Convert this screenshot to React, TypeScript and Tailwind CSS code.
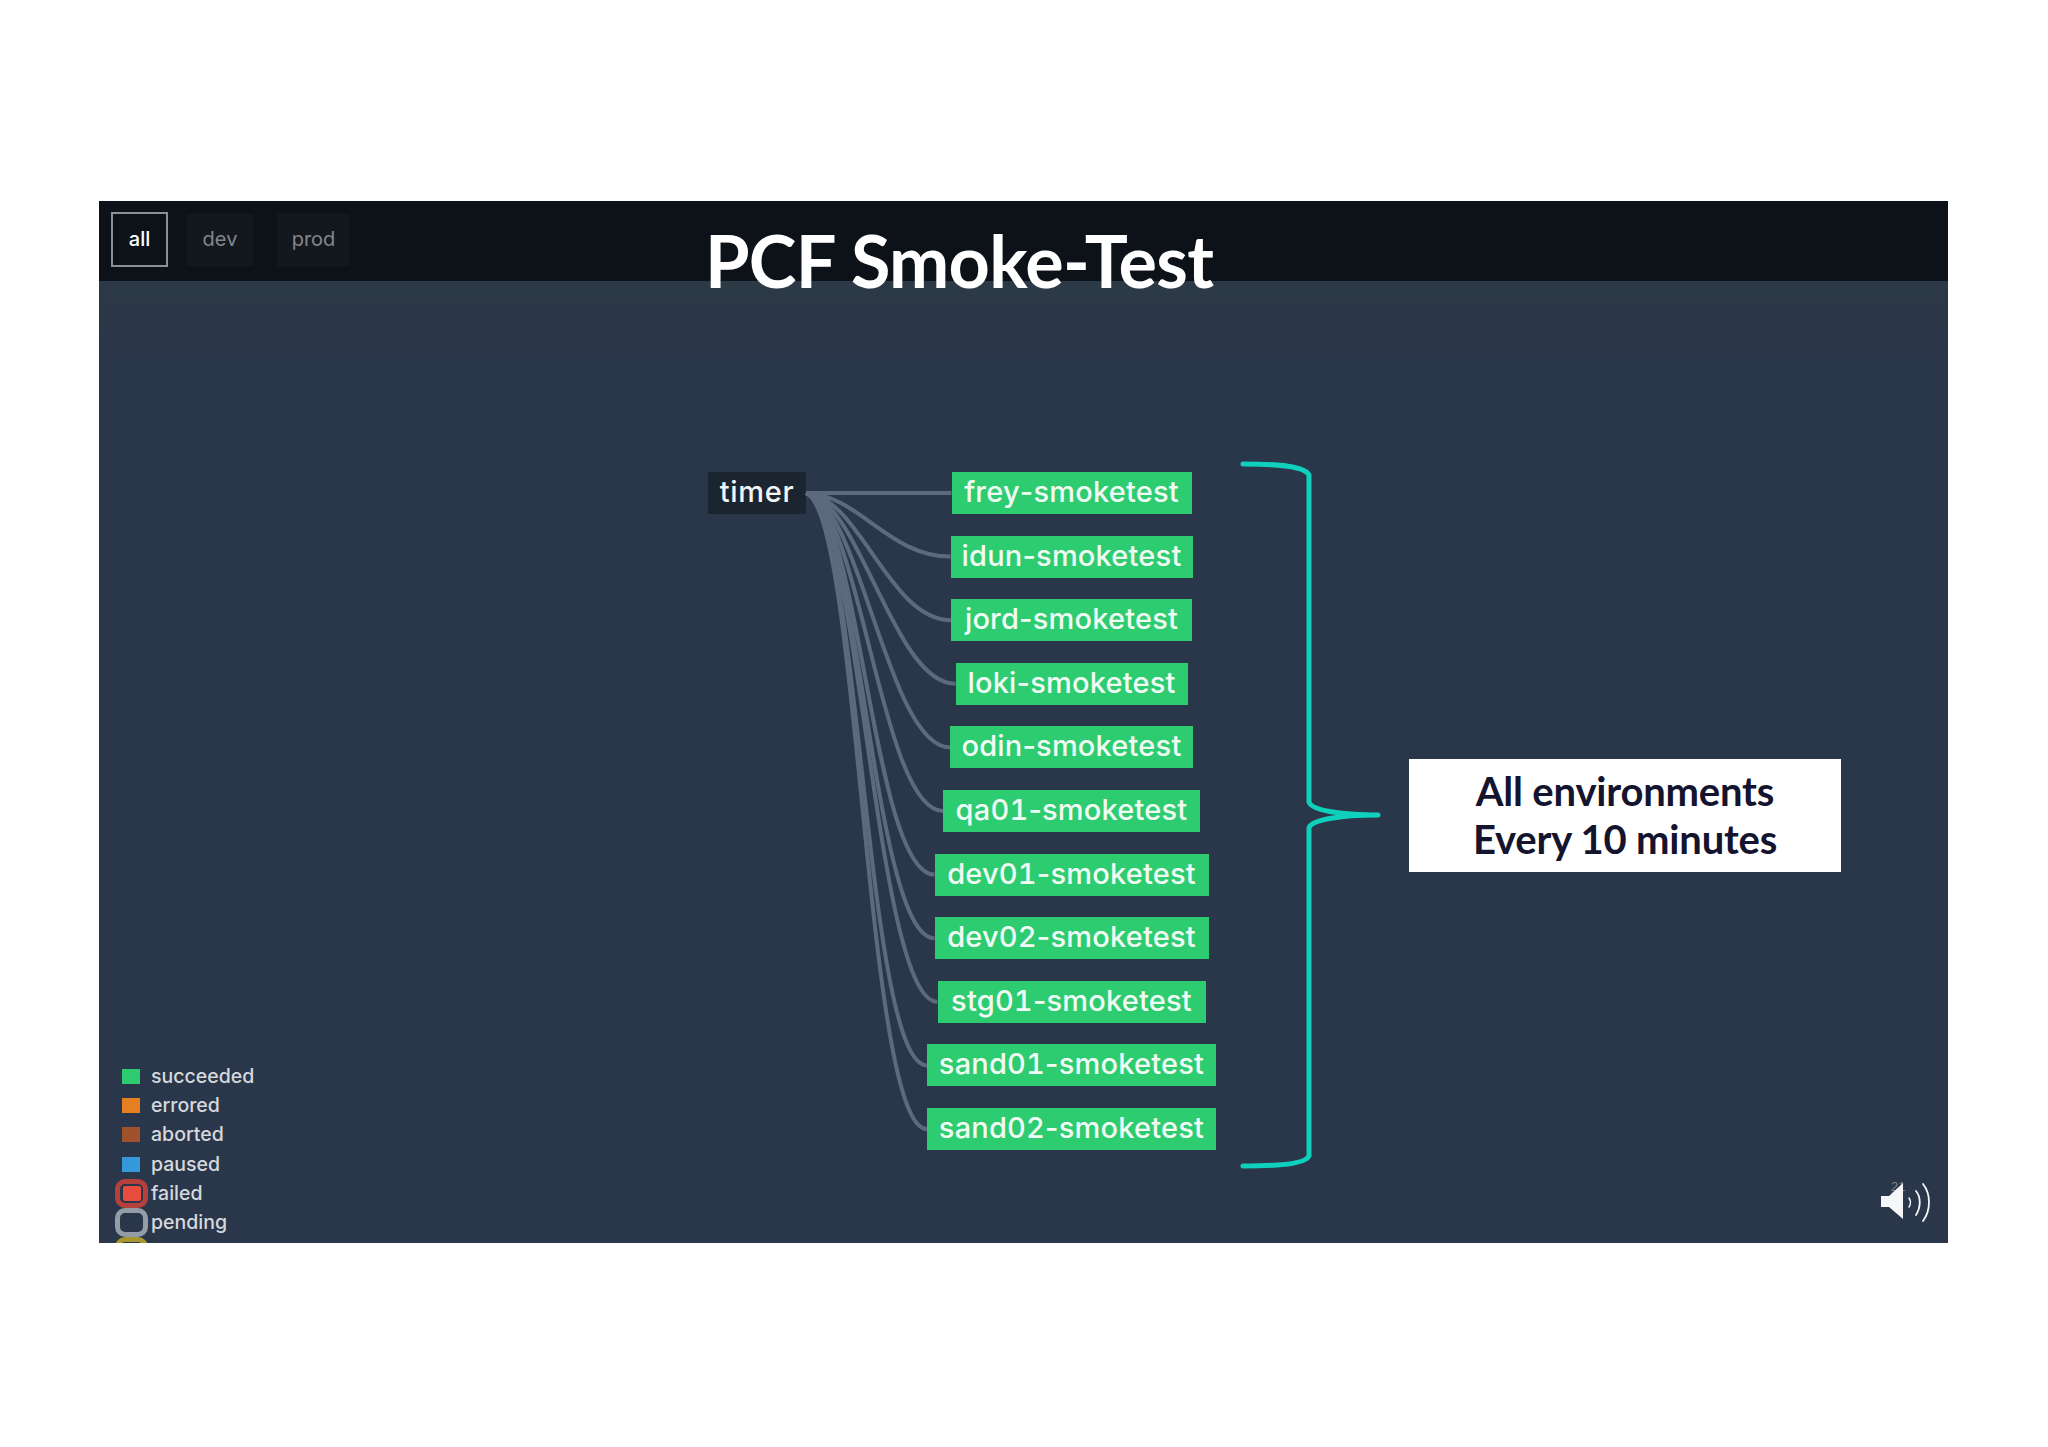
const nodes = [
  { name: "frey", width: "w-[240px]", px: 240 },
  { name: "idun", width: "w-[242px]", px: 242 },
  { name: "jord", width: "w-[241px]", px: 241 },
  { name: "loki", width: "w-[232px]", px: 232 },
  { name: "odin", width: "w-[243px]", px: 243 },
  { name: "qa01", width: "w-[257px]", px: 257 },
  { name: "dev01", width: "w-[274px]", px: 274 },
  { name: "dev02", width: "w-[274px]", px: 274 },
  { name: "stg01", width: "w-[268px]", px: 268 },
  { name: "sand01", width: "w-[289px]", px: 289 },
  { name: "sand02", width: "w-[289px]", px: 289 },
];

const legend = [
  { label: "succeeded", swatch: "bg-[#2ecc71]" },
  { label: "errored", swatch: "bg-[#e67e22]" },
  { label: "aborted", swatch: "bg-[#a0522d]" },
  { label: "paused", swatch: "bg-[#3498db]" },
  { label: "failed", swatch: "bg-[#e74c3c]", ring: "border-[#b5403c]" },
  { label: "pending", swatch: "bg-[#2a3649]", ring: "border-[#949ca6]" },
  { label: "running", swatch: "bg-[#f1c40f]", ring: "border-[#a8962f]" },
];

// edges start at the timer's right side, x is relative to the svg's left edge
function Edges() {
  return (
    <svg width="121" height="700" className="shrink-0 overflow-visible" fill="none" stroke="#5d6a7d" strokeWidth="4">
      {nodes.map((node, i) => {
        const endX = 144.5 - node.px / 2 + 121;
        const endY = 21 + i * 63.6;
        if (i === 0) return <path key={node.name} d={`M0 21H${endX}`} />;
        return (
          <path
            key={node.name}
            d={`M0 21C54 ${21 + endY * 0.03} ${endX - 62} ${endY} ${endX} ${endY}`}
          />
        );
      })}
    </svg>
  );
}

function Brace() {
  return (
    <svg width="144" height="720" className="shrink-0" fill="none" stroke="#0fd0bd" strokeWidth="5" strokeLinecap="round">
      <path d="M4 8C40 8 66 10 70 19V346C72 354 100 359 139 359M139 359C100 359 72 364 70 372V700C66 708 40 710 4 710" />
    </svg>
  );
}

function Speaker() {
  return (
    <div className="relative h-[44px] w-[52px]">
      <span className="absolute left-[10px] top-0 text-[13px] leading-none text-[#7d8794] [font-family:'Liberation_Sans',sans-serif]">
        21
      </span>
      <svg width="52" height="44" viewBox="0 0 52 44" className="relative" fill="none" stroke="#f4f6f8" strokeLinecap="round">
        <path d="M0 16H8L22 3V39L8 27H0Z" fill="#f4f6f8" stroke="none" />
        <path d="M28 18C30 21 30 24 28 27" strokeWidth="1.5" />
        <path d="M35 11C40 17 40 27 35 35" strokeWidth="1.8" />
        <path d="M42 4C50 14 50 30 42 41" strokeWidth="1.8" />
      </svg>
    </div>
  );
}

export default function App() {
  return (
    <div className="min-h-[1447px] bg-white pt-[201px] pl-[99px] [font-family:Inter,sans-serif]">
      <div className="flex h-[1042px] w-[1849px] flex-col overflow-hidden bg-[#2a3649]">
        <div className="flex h-[80px] shrink-0 items-start bg-[#0d1219] pl-[12px] pt-[11px] text-[20px]">
          <button type="button" className="h-[55px] w-[57px] border-2 border-[#8b9096] pb-[2px] font-medium text-white">
            all
          </button>
          <button type="button" className="ml-[18px] mt-[2px] h-[52px] w-[68px] bg-[#13171e] pb-[2px] text-[#83878c]">
            dev
          </button>
          <button type="button" className="ml-[23px] mt-[2px] h-[52px] w-[73px] bg-[#13171e] pb-[2px] text-[#83878c]">
            prod
          </button>
          <h1 className="relative z-10 ml-[355px] mt-[4px] whitespace-nowrap text-[72px] font-bold leading-[88px] tracking-[-0.7px] text-white [font-family:Lato,sans-serif]">
            PCF Smoke-Test
          </h1>
        </div>

        <div className="flex flex-1 items-start bg-gradient-to-b from-[#2c3946] via-[#2a3649] via-8% to-[#2a3649]">
          <div className="w-[609px] shrink-0 pl-[16px] pt-[781px]">
            {legend.map((item) => (
              <div key={item.label} className="flex h-[29.2px] items-center text-[19.5px] font-medium text-[#d5d9de]">
                <span className="flex w-[36px] shrink-0 justify-start">
                  {item.ring ? (
                    <span className={`flex h-[29px] w-[33px] items-center justify-center rounded-[10px] border-[5px] ${item.ring}`}>
                      <span className={`h-[15px] w-[18px] rounded-[2px] ${item.swatch}`} />
                    </span>
                  ) : (
                    <span className={`ml-[7px] h-[15px] w-[18px] ${item.swatch}`} />
                  )}
                </span>
                {item.label}
              </div>
            ))}
          </div>

          <div className="mt-[191px] flex h-[42px] w-[98px] shrink-0 items-center justify-center bg-[#1b2530] pb-[2px] text-[29px] font-medium tracking-[0.7px] text-[#f2f4f6]">
            timer
          </div>

          <div className="mt-[191px] flex shrink-0">
            <Edges />
            <div className="flex w-[289px] shrink-0 flex-col items-center gap-[21.6px]">
              {nodes.map((node) => (
                <div
                  key={node.name}
                  className={`h-[42px] whitespace-nowrap bg-[#2ecc71] text-center text-[29px] font-medium leading-[40px] tracking-[0.2px] text-[#f0fbf4] ${node.width}`}
                >
                  <span className="tabular-nums">{node.name}</span>-smoketest
                </div>
              ))}
            </div>
          </div>

          <div className="ml-[23px] mt-[175px] shrink-0">
            <Brace />
          </div>

          <div className="ml-[26px] mt-[478px] flex h-[113px] w-[432px] shrink-0 flex-col items-center justify-center bg-white pb-[2px] text-[40px] font-bold leading-[48px] tracking-[-0.2px] text-[#14142e] [font-family:Lato,sans-serif]">
            <span>All environments</span>
            <span>Every 10 minutes</span>
          </div>

          <div className="ml-[40px] mt-[899px] shrink-0">
            <Speaker />
          </div>
        </div>
      </div>
    </div>
  );
}
